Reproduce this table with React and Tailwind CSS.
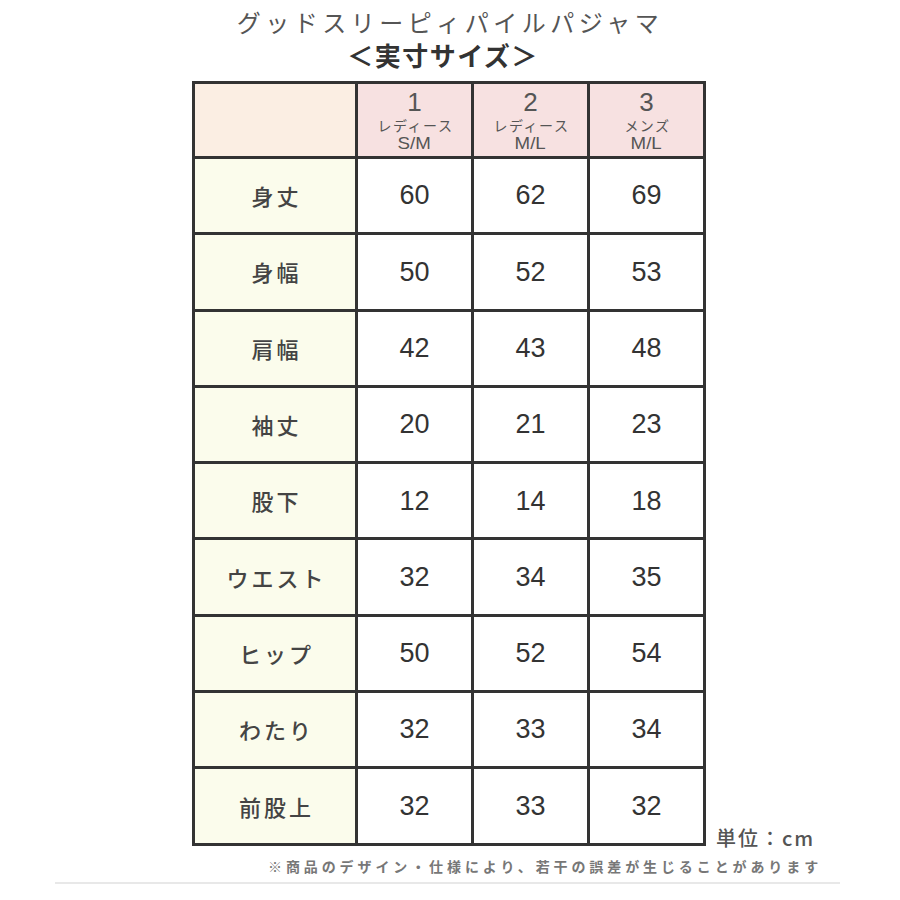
import React from 'react';

const sizes = [
    { no: '1', kind: 'レディース', size: 'S/M' },
    { no: '2', kind: 'レディース', size: 'M/L' },
    { no: '3', kind: 'メンズ', size: 'M/L' },
];

const rows = [
    ['身丈', 60, 62, 69],
    ['身幅', 50, 52, 53],
    ['肩幅', 42, 43, 48],
    ['袖丈', 20, 21, 23],
    ['股下', 12, 14, 18],
    ['ウエスト', 32, 34, 35],
    ['ヒップ', 50, 52, 54],
    ['わたり', 32, 33, 34],
    ['前股上', 32, 33, 32],
];

const jp = { fontFamily: '"Noto Sans CJK JP", "Noto Sans", sans-serif' };
const num = { fontFamily: '"Liberation Sans", Arial, sans-serif' };

const App = () => {
    return (
        <div className="w-[900px] h-[900px] bg-white overflow-hidden" style={jp}>
            {/* title */}
            <div className="flex flex-col items-center pt-[6px]">
                <h1 className="text-[24px] leading-[32px] tracking-[4.5px] text-[#555] font-normal">グッドスリーピィパイルパジャマ</h1>
                <h2 className="text-[26px] leading-[34px] tracking-[1.5px] text-[#333] font-bold pr-[14px]">＜実寸サイズ＞</h2>
            </div>

            <div className="flex items-end mt-[9px]">
                <div className="ml-[192px] grid grid-cols-[160px_113px_113px_113px] grid-rows-[72px_repeat(9,73.3px)] gap-[3px] p-[3px] bg-[#333]">
                    <div className="bg-[#fbeee3]" />
                    {sizes.map(s => (
                        <div key={s.no} className="bg-[#f7e1e1] flex flex-col items-center text-[#555]">
                            <span className="text-[26px] leading-[28px] mt-[4px] font-light" style={num}>{s.no}</span>
                            <span className="text-[14px] leading-[19px] tracking-[1.5px] pl-[2px]">{s.kind}</span>
                            <span className="text-[17px] leading-[17px] scale-x-110" style={num}>{s.size}</span>
                        </div>
                    ))}
                    {rows.map(r => (
                        <React.Fragment key={r[0]}>
                            <div className="bg-[#fbfcec] flex items-center justify-center text-[22px] tracking-[3px] pl-[3px] text-[#444] font-medium">{r[0]}</div>
                            {r.slice(1).map((v, i) => (
                                <div key={i} className="bg-white flex items-center justify-center text-[27px] text-[#333]" style={num}>{v}</div>
                            ))}
                        </React.Fragment>
                    ))}
                </div>
                <div className="ml-[10px] mb-[-4px] text-[20px] leading-[24px] text-[#555] font-medium tracking-[2px]">単位：cm</div>
            </div>

            <p className="mt-[10px] ml-[268px] text-[14px] leading-[20px] tracking-[3.9px] text-[#777] font-bold whitespace-nowrap">※商品のデザイン・仕様により、若干の誤差が生じることがあります</p>

            <div className="mt-[6px] ml-[55px] w-[785px] h-[2px] bg-[#e8e8e8]" />
        </div>
    );
};

export default App;
